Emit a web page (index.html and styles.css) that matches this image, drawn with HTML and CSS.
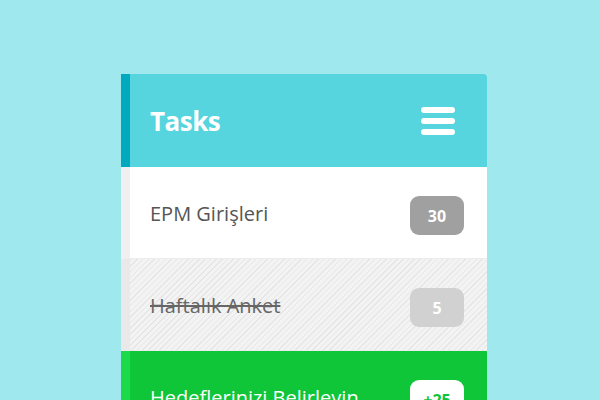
FILE: index.html
```html
<!DOCTYPE html>
<html>
<head>
<meta charset="utf-8">
<link rel="stylesheet" href="styles.css">
</head>
<body>
<div class="card">
  <div class="header">
    <h1 class="title">Tasks</h1>
    <div class="menu"><span></span><span></span><span></span></div>
  </div>
  <div class="row">
    <span class="label">EPM Girişleri</span>
    <span class="badge badge-gray">30</span>
  </div>
  <div class="row row-done">
    <span class="label">Haftalık Anket</span>
    <span class="badge badge-light">5</span>
  </div>
  <div class="row row-green">
    <span class="label">Hedeflerinizi Belirleyin</span>
    <span class="badge badge-white">+25</span>
  </div>
</div>
</body>
</html>
```
FILE: styles.css
```css
html, body {
  margin: 0;
  padding: 0;
  background: #9fe9ee;
  height: 400px;
  overflow: hidden;
}
body {
  padding: 74px 0 0 121px;
  font-family: "Open Sans", "DejaVu Sans", sans-serif;
}
.card {
  width: 366px;
  border-radius: 0 4px 0 0;
  overflow: hidden;
}
.header {
  height: 93px;
  background: #56d5de;
  border-left: 9px solid #00a9bd;
  display: flex;
  align-items: center;
  justify-content: space-between;
  padding: 0 32px 0 20px;
}
.title {
  margin: 0;
  color: #fff;
  font-size: 26px;
  font-weight: 700;
  letter-spacing: -0.5px;
}
.menu {
  width: 34px;
  display: flex;
  flex-direction: column;
  gap: 5px;
}
.menu span {
  height: 6px;
  background: #fff;
  border-radius: 3px;
}
.row {
  height: 91px;
  border-bottom: 1px solid #ececec;
  border-left: 9px solid #f0f0f0;
  background: #fff;
  display: flex;
  align-items: center;
  justify-content: space-between;
  padding: 0 23px 0 20px;
}
.label {
  font-size: 20px;
  color: #555;
  margin-top: 2px;
}
.row-done {
  background: #f3f3f3 repeating-linear-gradient(-45deg, #f3f3f3 0 3px, #e6e6e6 3px 4px);
  border-left-color: #e9e9e9;
}
.row-done .label {
  text-decoration: line-through;
  text-decoration-thickness: 2px;
  color: #666;
}
.row-green {
  background: #0fc638;
  border-left-color: #1dda4b;
  border-bottom: none;
}
.row-green .label {
  color: #fff;
}
.badge {
  width: 54px;
  height: 39px;
  margin-top: 6px;
  border-radius: 9px;
  display: flex;
  align-items: center;
  justify-content: center;
  font-weight: 700;
  font-size: 16px;
  color: #fff;
}
.badge-gray { background: #a0a0a0; }
.badge-light { background: #d1d1d1; }
.badge-white { background: #fff; color: #0fc638; }
```
